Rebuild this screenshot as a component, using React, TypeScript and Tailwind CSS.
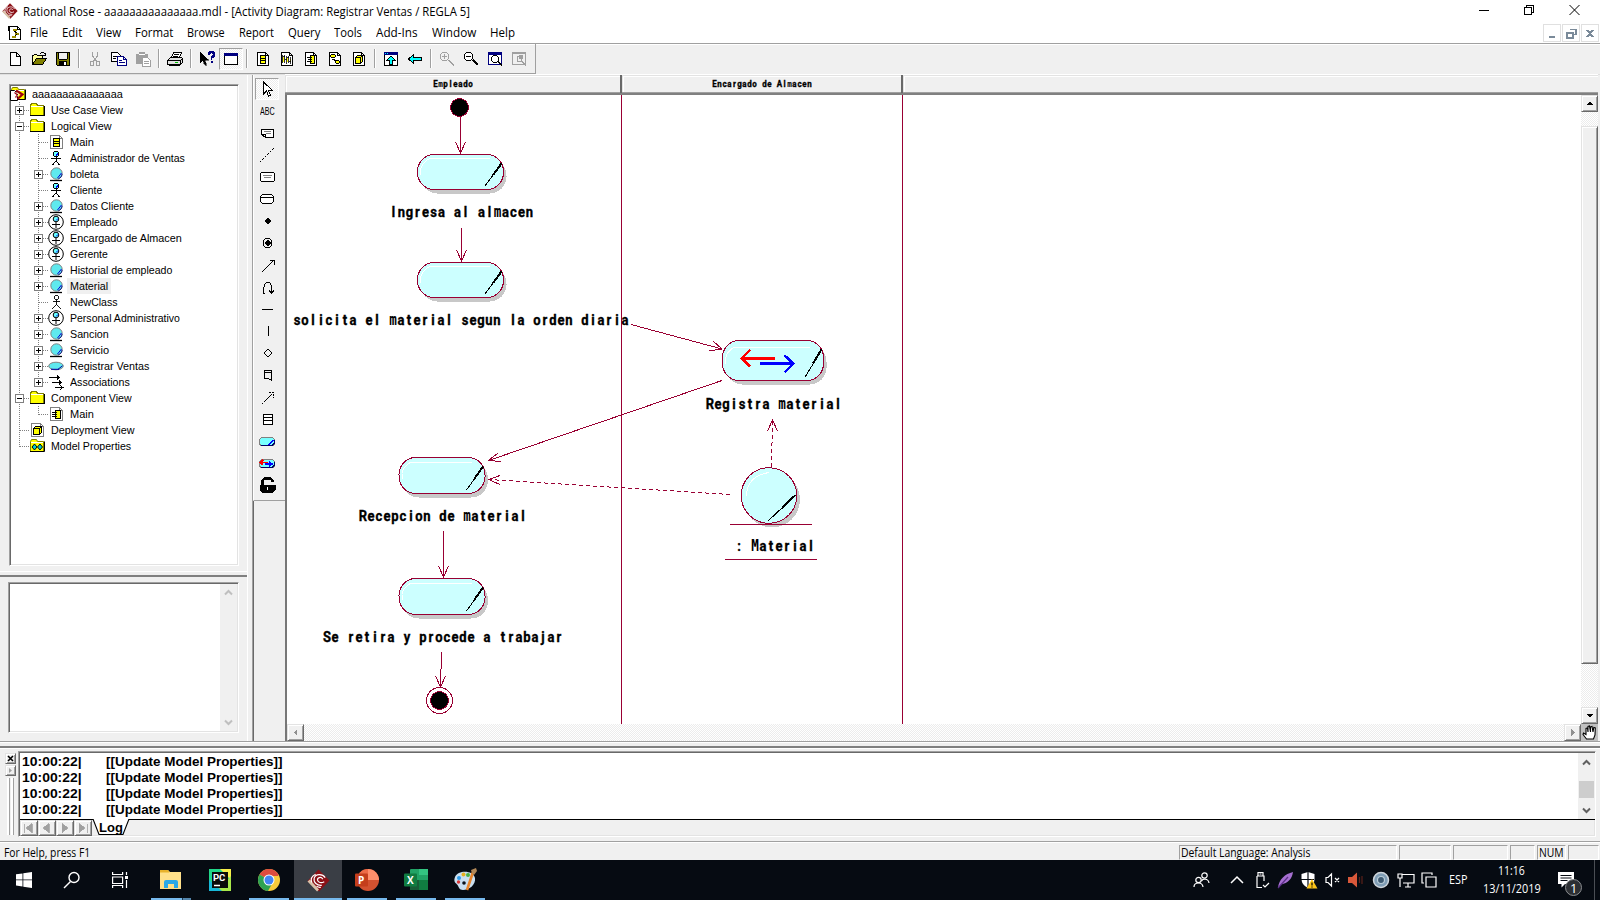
import React, { useLayoutEffect, useRef } from 'react';

const UI = "font-['Open_Sans','Noto_Sans',sans-serif]";
const SANS = "font-['Liberation_Sans',Arial,sans-serif]";
const DITHER = 'bg-[repeating-conic-gradient(#ececec_0_25%,#ffffff_0_50%)] bg-[length:2px_2px]';
const RAISED =
  'bg-[#f0f0f0] border border-t-[#e3e3e3] border-l-[#e3e3e3] border-b-[#696969] border-r-[#696969] shadow-[inset_1px_1px_0_#fff,inset_-1px_-1px_0_#a0a0a0]';
const SUNKEN =
  'border border-t-[#a0a0a0] border-l-[#a0a0a0] border-b-white border-r-white shadow-[inset_1px_1px_0_#696969,inset_-1px_-1px_0_#e3e3e3]';
const ROSE = '#990033';

/* A line of text that is stretched horizontally to a given width. */
function Fit({ w, children, className = '' }: { w: number; children: string; className?: string }) {
  const ref = useRef<HTMLSpanElement>(null);
  useLayoutEffect(() => {
    const el = ref.current;
    if (el && el.offsetWidth) el.style.transform = `scaleX(${w / el.offsetWidth})`;
  }, [w]);
  return (
    <span className={`inline-block shrink-0 whitespace-pre ${className}`} style={{ width: w }}>
      <span ref={ref} className="inline-block origin-left">{children}</span>
    </span>
  );
}

function Ico({ w = 16, h = 16, children, smooth = false }: { w?: number; h?: number; children: React.ReactNode; smooth?: boolean }) {
  return (
    <svg width={w} height={h} viewBox={`0 0 ${w} ${h}`} className="block shrink-0" fill="none" stroke="#000" shapeRendering={smooth ? 'auto' : 'crispEdges'}>
      {children}
    </svg>
  );
}

function RoseLogo({ s = 16 }: { s?: number }) {
  return (
    <svg width={s} height={s} viewBox="0 0 24 24" className="block shrink-0">
      <path d="M12 .5 23.500 12 12.500 23.500 .5 12.500z" fill="#8b1016" />
      <path d="M.5 13 10.500 23.500 12.500 21.500 3 11z" fill="#d8c0a8" />
      <path d="M19 9C16 4.500 9 5 7.500 9.500c-1 4.500 3 8 8 7.500M16.500 10.500c-2-3-6-1.500-5.500 1.200 .5 2.500 4 3.500 7 1.500M9 5.500c-4 2-5.500 5-4 8.500M10 18c1.500 1 3 1.300 4.500 1" stroke="#fff" strokeWidth="1.200" fill="none" />
    </svg>
  );
}

/* ---------- toolbar ---------- */
const page = <path d="M2.500 1.500h8l3 3v10h-11z M10.500 1.500v3h3" fill="#fff" />;
const toolIcons: Record<string, React.ReactNode> = {
  new: <path d="M3.500 1.500h6l4 4v9h-10z M9.500 1.500v4h4" fill="#fff" />,
  open: (
    <>
      <path d="M1.500 13.500v-9h1l1-1h2l1 1h5v3" fill="#ffff9c" />
      <path d="M1.500 13.500l4-6h10l-4 6z" fill="#808000" />
      <path d="M9 2.500h1M10 1.500h3M13 2.500h1M14.500 2v3M12 4.500h3" />
    </>
  ),
  save: (
    <>
      <path d="M1.500 1.500h13v13h-12l-1-1z" fill="#808000" />
      <path d="M4 2h8v6h-8z" fill="#f0f0f0" stroke="none" />
      <path d="M4 10h8v4h-8z" fill="#000" stroke="none" />
      <path d="M9 11h2v3h-2z" fill="#fff" stroke="none" />
      <path d="M3.500 2v6M12.500 2v6M4 8.500h8" />
    </>
  ),
  cut: <path d="M5.500 1v4l4 5M10.500 1v4l-4 5M3.500 10.500h3v4h-3zM9.500 10.500h3v4h-3z" stroke="#a0a0a0" />,
  copy: (
    <>
      <path d="M.5 1.500h6l3 3v6h-9z" fill="#fff" />
      <path d="M2 5.500h4M2 7.500h3" />
      <path d="M6.500 5.500h6l3 3v6h-9z M12.500 5.500v3h3" fill="#fff" stroke="#000080" />
      <path d="M8 9.500h3M8 11.500h6" stroke="#000080" />
    </>
  ),
  paste: (
    <>
      <path d="M1 3h12v10h-12z M4 1h6v3h-6z" fill="#a0a0a0" stroke="none" />
      <path d="M4 3.500h6" stroke="#fff" />
      <path d="M7.500 6.500h5l3 3v6h-8z M9 10.500h5M9 12.500h5" fill="#fff" stroke="#a0a0a0" />
    </>
  ),
  print: (
    <>
      <path d="M4.500 6.500l2-5h8l-2 5" fill="#fff" />
      <path d="M7 3.500h5M6 5.500h5" />
      <path d="M.5 9.500l3-3h11l1 1v4l-2 2h-13z" fill="#e0e0e0" />
      <path d="M.5 9.500h13v4M13.500 9.500l2-2M2.500 13.500v1h10l2-2" />
      <path d="M8 11.500h3" stroke="#00c000" />
    </>
  ),
  help: (
    <>
      <path d="M1 1v11l3-2.500 2 4.500h1.500l-1.500-5h3.500z" fill="#000" strokeWidth=".5" />
      <path d="M10 4v-2h1v-1h3v1h1v3h-1v1h-1.500v3M12 11h1.500" stroke="#000080" strokeWidth="1.600" />
    </>
  ),
  win: (
    <>
      <path d="M1.500 2.500h13v11h-13z" fill="#fff" stroke="#000" />
      <path d="M1 2h14v3h-14z" fill="#000080" stroke="none" />
    </>
  ),
  cls: <>{page}<path d="M5.500 4.500h5v8h-5z M6 7.500h4M6 9.500h4" fill="#ff0" /></>,
  seq: <>{page}<path d="M4 6h1v5h-1zM8 7h1v4h-1zM11 8h1v3h-1z" fill="#ff0" stroke="none" /><path d="M3.500 4v8M5.500 4v8M7.500 5v8M9.500 5v7M11.500 6v7M4 5.500h2M6 8.500h2M8 6.500h2M10 10.500h2" strokeWidth=".8" /></>,
  cmp: <>{page}<path d="M7.500 4.500h4v8h-4z" fill="#ff0" /><path d="M4 6.500h5M5 8.500h4M4 10.500h5" /></>,
  sta: <>{page}<path d="M4.500 3.500h3l1 1v1l-1 1h-3l-1-1v-1z M9.500 9.500h2l1 1v1l-1 1h-2l-1-1v-1z" fill="#ff0" /><path d="M5 8.500h2l2 2" /></>,
  dep: <>{page}<path d="M4.500 6.500l2-2h5v6l-2 2h-5z" fill="#ff0" /><path d="M4.500 6.500h5v6M9.500 6.500l2-2" /></>,
  up: (
    <>
      <path d="M1.500 1.500h13v13h-13z" fill="#fff" />
      <path d="M1 1h14v2.500h-14z" fill="#000080" stroke="none" />
      <path d="M2 2h1M4 2h1" stroke="#0ff" />
      <path d="M8 5l4.500 4.500h-3v4h-3v-4h-3z" fill="#0ff" />
    </>
  ),
  back: <path d="M1.500 8l5-4.500v3h8v3h-8v3z" fill="#0ff" />,
  zin: <path d="M3.500 1.500h4l2 2v4l-2 2h-4l-2-2v-4zM3 5.500h5M5.500 3v5M9 9l6 6M10 9l5 5" stroke="#a0a0a0" />,
  zout: <><path d="M3.500 1.500h4l2 2v4l-2 2h-4l-2-2v-4z" fill="#fff" /><path d="M3 5.500h5M9 9l5 5M10 9l5 5M10 8l5 5" /></>,
  zwin: (
    <>
      <path d="M1.500 1.500h13v12h-13z" fill="#fff" stroke="#000080" />
      <path d="M1 1h14v3h-14z" fill="#000080" stroke="none" />
      <path d="M6.500 4.500h3l2 2v3l-2 2h-3l-2-2v-3z" fill="#fff" />
      <path d="M10 10l5 5M11 10l4 4" />
    </>
  ),
  zund: <><path d="M1.500 1.500h13v12h-13zM1 2.500h13M6.500 5.500h4v5h-4zM10 10l5 5M11 10l4 4" stroke="#a0a0a0" /><path d="M8 4h4v4h-4z" fill="#a0a0a0" stroke="none" /></>,
};
const toolbar = ['new', 'open', 'save', '|', 'cut', 'copy', 'paste', '|', 'print', '|', 'help', 'win', '|', 'cls', 'seq', 'cmp', 'sta', 'dep', '|', 'up', 'back', '|', 'zin', 'zout', 'zwin', 'zund'];

const menus: [string, number, number][] = [
  ['File', 18, 32], ['Edit', 20, 34], ['View', 25, 39], ['Format', 38, 52], ['Browse', 38, 52], ['Report', 35, 49],
  ['Query', 32, 46], ['Tools', 28, 42], ['Add-Ins', 42, 56], ['Window', 44, 58], ['Help', 25, 40],
];

/* ---------- tree ---------- */
const folder = (
  <>
    <path d="M1.500 13.500v-10l1-2h5l1 2h6v10z" fill="#ff0" stroke="#808000" />
    <path d="M2 4.500h12" stroke="#fff" />
    <path d="M1 13.500h14.500v-10" />
  </>
);
const head = (
  <>
    <circle cx="8" cy="4" r="2.700" fill="#6ff" stroke="#000" />
    <path d="M8 5.500l2-2" stroke="#00f" />
  </>
);
const ball = (
  <>
    <circle cx="8.500" cy="7.500" r="5.700" fill="#5fe9ee" stroke="#808080" />
    <path d="M9.500 12l4-5" stroke="#0000e0" />
    <path d="M14.200 8a6 6 0 0 1-4 5" stroke="#000080" strokeWidth=".8" />
    <path d="M2 14.500h12" strokeWidth="1.300" />
  </>
);
const sheet = <><path d="M2.500 1.500h9l3 3v10h-12z" fill="#fff" stroke="#808080" /><path d="M11.500 1.500v3h3" stroke="#808080" /></>;
const treeIcons: Record<string, React.ReactNode> = {
  root: <>{folder}<path d="M.5 4.500h4l3 3v7h-7z" fill="#fff" /><path d="M6 4.500l6.500 4-5 4.500" stroke="#a00010" strokeWidth="2.200" /><path d="M4.500 6.500l3 2.500-2 2.500" stroke="#a00010" strokeWidth="1.300" /><path d="M6.500 6.500l2.500 2-2 2" stroke="#fff" /></>,
  folder,
  main: <>{sheet}<path d="M5.500 4.500h6v8h-6z M6 7.500h5M6 9.500h5" fill="#ff0" /></>,
  cmain: <>{sheet}<path d="M7.500 4.500h5v8h-5z" fill="#ff0" strokeWidth="1.300" /><path d="M4 6.500h5M4 8.500h5M4 10.500h5" /></>,
  deploy: <>{sheet}<path d="M4.500 6.500l2-2h6v6l-2 2h-6z M4.500 6.500h6v6M10.500 6.500l2-2" fill="#ff0" strokeWidth="1.300" /></>,
  props: <>{folder}<path d="M3 9l2.500-3 2.500 3-2.500 3zM8.500 9l2.500-3 2.500 3-2.500 3z" fill="#0cc" /></>,
  actor: <>{head}<path d="M8 7v4M3 8.500h10M8 11l-3.500 4M8 11l3.500 4" /></>,
  plain: <><circle cx="8.500" cy="3.500" r="2.200" strokeWidth=".9" /><path d="M8.500 6v4M5 7.500h7M8.500 10l-4 5M8.500 10l4 5" strokeWidth=".9" /></>,
  ball,
  worker: <><circle cx="8" cy="8" r="7.300" fill="#fff" /><circle cx="8" cy="5" r="2.800" fill="#6ff" /><path d="M8 6.500l2-2" stroke="#00f" /><path d="M8 8v6M4 10.500h8" /></>,
  usecase: <><ellipse cx="8" cy="8" rx="7.300" ry="3.800" fill="#5fe9ee" stroke="#808080" /><path d="M10 11.300l4.500-3.500M3 11.300h8" stroke="#0000a0" /></>,
  assoc: <path d="M1 3.500h10M9 1.500l2 2-2 2M4 8.500h9M11 6.500l2 2-2 2M7 13.500h8M12 11.500l3 2-3 2" />,
};
type Row = { d: 0 | 1 | 2; i: string; t: string; w: number; x?: '+' | '-'; sel?: boolean; last?: boolean };
const rows: Row[] = [
  { d: 0, i: 'root', t: 'aaaaaaaaaaaaaaa', w: 91 },
  { d: 1, i: 'folder', t: 'Use Case View', w: 72, x: '+' },
  { d: 1, i: 'folder', t: 'Logical View', w: 61, x: '-' },
  { d: 2, i: 'main', t: 'Main', w: 24 },
  { d: 2, i: 'actor', t: 'Administrador de Ventas', w: 115 },
  { d: 2, i: 'ball', t: 'boleta', w: 29, x: '+' },
  { d: 2, i: 'actor', t: 'Cliente', w: 32 },
  { d: 2, i: 'ball', t: 'Datos Cliente', w: 64, x: '+' },
  { d: 2, i: 'worker', t: 'Empleado', w: 48, x: '+' },
  { d: 2, i: 'worker', t: 'Encargado de Almacen', w: 112, x: '+' },
  { d: 2, i: 'worker', t: 'Gerente', w: 38, x: '+' },
  { d: 2, i: 'ball', t: 'Historial de empleado', w: 102, x: '+' },
  { d: 2, i: 'ball', t: 'Material', w: 38, x: '+', sel: true },
  { d: 2, i: 'plain', t: 'NewClass', w: 48 },
  { d: 2, i: 'worker', t: 'Personal Administrativo', w: 110, x: '+' },
  { d: 2, i: 'ball', t: 'Sancion', w: 39, x: '+' },
  { d: 2, i: 'ball', t: 'Servicio', w: 39, x: '+' },
  { d: 2, i: 'usecase', t: 'Registrar Ventas', w: 79, x: '+' },
  { d: 2, i: 'assoc', t: 'Associations', w: 60, x: '+', last: true },
  { d: 1, i: 'folder', t: 'Component View', w: 81, x: '-' },
  { d: 2, i: 'cmain', t: 'Main', w: 24, last: true },
  { d: 1, i: 'deploy', t: 'Deployment View', w: 83 },
  { d: 1, i: 'props', t: 'Model Properties', w: 80, last: true },
];

/* One 19px wide guide cell of a tree row. */
function Guide({ row, level }: { row: Row; level: 1 | 2 }) {
  const own = row.d === level;
  const dots = { stroke: '#808080', strokeDasharray: '1 1' };
  return (
    <svg width="19" height="16" className="block shrink-0" fill="none" shapeRendering="crispEdges">
      <path d={own && row.last ? 'M9.500 0V9' : 'M9.500 0V16'} {...dots} />
      {own && <path d="M10 8.500H19" {...dots} />}
      {own && row.x && (
        <>
          <path d="M5.500 4.500h8v8h-8z" fill="#fff" stroke="#808080" />
          <path d={row.x === '+' ? 'M7 8.500h5M9.500 6v5' : 'M7 8.500h5'} stroke="#000" />
        </>
      )}
    </svg>
  );
}

function Tree() {
  return (
    <div className={`ml-[9px] mt-[9px] h-[482px] w-[230px] bg-white ${SUNKEN} pt-px ${SANS} text-[11px] leading-4`}>
      {rows.map((r, n) => (
        <div key={n} className="flex h-4 items-center">
          {r.d > 0 && <Guide row={r} level={1} />}
          {r.d > 1 && <Guide row={r} level={2} />}
          <Ico smooth={['ball', 'worker', 'usecase', 'root', 'props'].includes(r.i)}>{treeIcons[r.i]}</Ico>
          <span className={`ml-[3px] flex h-4 items-center px-[3px] ${r.sel ? 'bg-[#f0f0f0]' : ''}`}>
            <Fit w={r.w}>{r.t}</Fit>
          </span>
        </div>
      ))}
    </div>
  );
}

/* ---------- toolbox ---------- */
const pill = (
  <>
    <rect x="4.500" y="7.500" width="15" height="8" rx="3" fill="#7ff" stroke="#808080" />
    <path d="M6 15.500h11l2-2v-4" stroke="#000060" />
  </>
);
const box: React.ReactNode[] = [
  <path d="M8.500 4v12l3-3 2 5 2-1-2-4.500h4z" fill="#fff" />,
  null,
  <><path d="M6.500 7.500h12v8h-8l-4-3z" fill="#fff" /><path d="M6.500 12.500h4v3" /><path d="M9 9.500h7M11 11.500h5" stroke="#808080" /></>,
  <path d="M5 18L19 4" strokeDasharray="2 1.500" />,
  <><rect x="5.500" y="6.500" width="14" height="9" rx="2" fill="#fff" /><path d="M8 9.500h9M9 11.500h7" stroke="#808080" /></>,
  <path d="M7.500 6.500h9l2 2v5l-2 2h-9l-2-2v-5zM5 9.500h14" fill="#fff" />,
  <path d="M12 8.500h1v1h1v1h1v1h-1v1h-1v1h-1v-1h-1v-1h-1v-1h1v-1h1z" fill="#000" />,
  <><circle cx="12.500" cy="11" r="4.500" /><path d="M12 8.500h1v1h1v1h1v1h-1v1h-1v1h-1v-1h-1v-1h-1v-1h1v-1h1z" fill="#000" /></>,
  <path d="M7 18L19 6M15 6.500h4.500v4" />,
  <path d="M9.500 17h-1v-3l1-5 2-3h3l2 4v7M14 14l2.500 3.500 2.500-3" />,
  <path d="M7 11.500h11" />,
  <path d="M13.500 6v10" />,
  <path d="M13 7l4 4-4 4-4-4z" />,
  <path d="M9.500 6.500h7v10l-3-2h-4zM9 8.500h8" />,
  <path d="M7 18L19 6M14 6.500h4.500v5" strokeDasharray="2 1" />,
  <path d="M8.500 6.500h9v10h-9zM8 9.500h9M8 12.500h9" fill="#fff" />,
  <>{pill}<path d="M14 15l4-5" stroke="#00f" strokeWidth="1.500" /></>,
  <>{pill}<path d="M5 10.500h8M8 8l-2.500 2.500L8 13" stroke="#f00" strokeWidth="1.500" /><path d="M10 12h7M14 9.500l3 2.500-3 2.500" stroke="#00f" strokeWidth="1.500" /></>,
  <><path d="M7.500 11V6.500l2-2h6l2 2v1.500" strokeWidth="2.600" /><path d="M5 11h15v5l-2 2h-11l-2-2z" fill="#000" /><path d="M12.500 13v3" stroke="#fff" strokeWidth="1.300" /></>,
];

function Toolbox() {
  return (
    <div className="flex w-[34px] shrink-0 flex-col border-l border-[#a0a0a0]">
      <div className="flex h-[426px] flex-col items-center border-b border-l border-b-[#a0a0a0] border-l-white pl-[2px] pr-[8px] pt-[3px]">
        {box.map((g, n) => (
          <div key={n} className={`flex h-[22px] w-6 shrink-0 items-center justify-center ${n === 0 ? `border border-b-white border-l-[#a0a0a0] border-r-white border-t-[#a0a0a0] ${DITHER}` : ''}`}>
            {n === 1 ? <Fit w={15} className="font-['Liberation_Sans',sans-serif] text-[11px] leading-4">ABC</Fit> : <Ico w={24} h={22}>{g}</Ico>}
          </div>
        ))}
      </div>
      <div className="flex-1 border-l border-[#696969]" />
    </div>
  );
}

/* ---------- diagram ---------- */
/* Text on a fixed pitch: every glyph is centred in its own cell. */
function Cells({ x, y, t, p = 8, s = 15.5 }: { x: number; y: number; t: string; p?: number; s?: number }) {
  const k = 0.84;
  const xs = t.split('').map((_, i) => ((i + 0.5) * p) / k).join(' ');
  return (
    <text
      transform={`translate(${x} ${y}) scale(${k} 1)`}
      x={xs}
      textAnchor="middle"
      fontFamily="Roboto, 'Liberation Sans', sans-serif"
      fontWeight="700"
      fontSize={s}
      fill="#000"
      stroke="#000"
      strokeWidth=".35"
      xmlSpace="preserve"
    >
      {t.split(/([mM])/).map((part, i) =>
        /^[mM]$/.test(part) ? <tspan key={i} fontFamily="'DejaVu Sans Mono', monospace" fontSize={s * 0.97} strokeWidth="0">{part}</tspan> : part,
      )}
    </text>
  );
}

function Activity({ x, y, w, h }: { x: number; y: number; w: number; h: number }) {
  return (
    <g shapeRendering="crispEdges">
      <rect x={x + 3.500} y={y + 4.500} width={w - 1} height={h - 1} rx={17} ry={17} fill="#c8c8c8" />
      <rect x={x + 0.5} y={y + 0.5} width={w - 1} height={h - 1} rx={16.500} ry={17} fill="#ccffff" stroke={ROSE} />
      <path d={`M${x + 3.500} ${y + h / 2 + 3}v-5q1-7 9-11.500H${x + w - 14}`} stroke="#fff" fill="none" />
      <path d={`M${x + w - 2.500} ${y + 9.500}L${x + w - 11} ${y + h / 2 + 3}`} stroke="#000" strokeWidth="2" />
      <path d={`M${x + w - 10} ${y + h / 2 + 2}L${x + w - 19} ${y + h - 4}`} stroke="#000" />
    </g>
  );
}

function Diagram() {
  return (
    <svg width="1294" height="629" viewBox="287 95 1294 629" className="block shrink-0 bg-white" fill="none">
      <g stroke={ROSE} shapeRendering="crispEdges">
        <path d="M621.500 95V724M902.500 95V724" />
        <path d="M460.500 117V153M455.500 142L460.500 153L465.500 142" />
        <path d="M461.500 228V261M456.500 250L461.500 261L466.500 250" />
        <path d="M631 324.500L722 349M713 341L722 349L709 351" />
        <path d="M722 380.500L488.500 460.500M498 453L488.500 460.500L501 461.500" />
        <path d="M730 494.500L488.500 479.500" strokeDasharray="4 3" />
        <path d="M500 475.500L488.500 479.500L500 484.500" />
        <path d="M771.500 467L772.500 420" strokeDasharray="4 3" />
        <path d="M767.500 431L772.500 420L777.500 431" />
        <path d="M443.500 531V578M438.500 566L443.500 577L448.500 566" />
        <path d="M441.500 652L440.500 687M435.500 676L440.500 687L445.500 676" />
        <circle cx="459.500" cy="107.500" r="9" fill="#000" />
        <circle cx="439.500" cy="700.500" r="13" />
        <circle cx="439.500" cy="700.500" r="9" fill="#000" />
      </g>
      <Activity x={417} y={154} w={87} h={36} />
      <Activity x={417} y={262} w={87} h={36} />
      <Activity x={722} y={340} w={102} h={41} />
      <Activity x={398.5} y={457} w={87} h={37} />
      <Activity x={398.5} y={578} w={87} h={37} />
      <g shapeRendering="crispEdges">
        <path d="M741 358.500H775M750 350L741.500 358.500L750 366.500" stroke="#f00" strokeWidth="2.600" />
        <path d="M760 363.500H794M784.500 355.500L793.500 363.500L784.500 372.500" stroke="#00f" strokeWidth="2.600" />
        <circle cx="772" cy="499.500" r="28" fill="#c8c8c8" />
        <circle cx="769" cy="495.500" r="27.800" fill="#ccffff" stroke={ROSE} />
        <path d="M746.500 496Q747 476 769 472.500" stroke="#fff" />
        <path d="M795.500 495L782 508" stroke="#000" strokeWidth="2" />
        <path d="M783 507L768 521" stroke="#000" />
        <path d="M730 524.500H812M725 559.500H817" stroke={ROSE} />
      </g>
      <Cells x={389.5} y={217} t="Ingresa al almacen" />
      <Cells x={293} y={325} t="solicita el material segun la orden diaria" />
      <Cells x={706} y={409} t="Registra material" />
      <Cells x={359} y={521} t="Recepcion de material" />
      <Cells x={735} y={551} t=": Material" />
      <Cells x={323} y={642} t="Se retira y procede a trabajar" />
    </svg>
  );
}

function Lane({ t, className }: { t?: string; className: string }) {
  return (
    <div className={`flex h-[17px] items-center justify-center border-l border-t border-[#e3e3e3] bg-[#f0f0f0] shadow-[inset_1px_1px_0_#fff] ${className}`}>
      {t && (
        <svg width={t.length * 5} height="12" className="-mt-[3px] block">
          <Cells x={0} y={9.500} t={t} p={5} s={9.5} />
        </svg>
      )}
    </div>
  );
}

function Tri({ d, c = '#000' }: { d: 'u' | 'd' | 'l' | 'r'; c?: string }) {
  const p = { u: 'M1 6h7L4.500 2.500z', d: 'M1 3h7L4.500 6.500z', l: 'M6 1v7L2.500 4.500z', r: 'M3 1v7L6.500 4.500z' }[d];
  return <svg width="9" height="9" className="block" shapeRendering="crispEdges"><path d={p} fill={c} /></svg>;
}
function Chev({ up, c }: { up?: boolean; c: string }) {
  return <svg width="9" height="7" className="block" fill="none"><path d={up ? 'M1 5.500L4.500 2L8 5.500' : 'M1 1.500L4.500 5L8 1.500'} stroke={c} strokeWidth="2" /></svg>;
}

function Canvas() {
  return (
    <div className="flex w-[1313px] shrink-0 flex-col">
      <div className="flex h-[22px] border-b-2 border-b-[#808080] border-t border-t-white bg-[#a0a0a0]">
        <Lane t="Empleado" className="w-[335px] pr-px" />
        <div className="w-[2px] bg-[#696969]" />
        <Lane t="Encargado de Almacen" className="w-[279px]" />
        <div className="w-[2px] bg-[#696969]" />
        <Lane className="flex-1" />
      </div>
      <div className="flex border-l-2 border-l-[#777]">
        <Diagram />
        <div className="flex h-[629px] w-[17px] flex-col">
          <div className={`flex h-[17px] items-center justify-center ${RAISED}`}><Tri d="u" /></div>
          <div className={`h-[14px] ${DITHER}`} />
          <div className={`h-[538px] ${RAISED}`} />
          <div className={`flex-1 ${DITHER}`} />
          <div className={`flex h-[17px] items-center justify-center ${RAISED}`}><Tri d="d" /></div>
        </div>
      </div>
      <div className="flex h-[17px] border-l-2 border-l-[#777]">
        <div className={`flex w-[17px] items-center justify-center ${RAISED}`}><Tri d="l" c="#909090" /></div>
        <div className={`w-[1260px] ${DITHER}`} />
        <div className={`flex w-[17px] items-center justify-center ${RAISED}`}><Tri d="r" c="#909090" /></div>
        <div className="flex w-[17px] items-center justify-center bg-[#c0c0c0]">
          <Ico w={15} h={15} smooth>
            <path d="M4.500 14L1 9.500 1.500 8 4 9.500V3.500L5.500 3l.5 4V1.500L7.500 1 8.500 7V2l1.500-.5L11 7l.8-4.500 1.500.5-.3 7-1.500 4z" fill="#fff" strokeWidth="1.100" />
          </Ico>
        </div>
      </div>
    </div>
  );
}

/* ---------- log ---------- */
function Log() {
  return (
    <div className="flex h-[89px] border-t-2 border-[#808080] pt-[3px] shadow-[inset_0_1px_0_#fff]">
      <div className="flex w-[18px] shrink-0 flex-col items-center pt-[2px]">
        <div className={`mr-[-2px] flex h-[11px] w-[11px] items-center justify-center ${RAISED}`}>
          <svg width="7" height="7"><path d="M1 1l5 5M6 1l-5 5" stroke="#000" strokeWidth="1.600" /></svg>
        </div>
        <div className={`mr-[-2px] mt-px flex h-[11px] w-[11px] items-center justify-center ${RAISED}`}>
          <svg width="5" height="7"><path d="M1 1v5l3-2.500z" fill="#a0a0a0" /></svg>
        </div>
        <div className="mr-[-2px] mt-[2px] flex gap-[1px]">
          <div className="h-[57px] w-[3px] border-r border-[#a0a0a0] bg-white" />
          <div className="h-[57px] w-[3px] border-r border-[#a0a0a0] bg-white" />
        </div>
      </div>
      <div className={`flex h-[86px] w-[1578px] flex-col bg-[#f0f0f0] ${SUNKEN}`}>
        <div className="ml-px mt-px flex h-[67px] border-b border-black bg-white">
          <div className={`flex-1 pl-[2px] pt-px ${SANS} text-[13px] font-bold leading-4`}>
            {[0, 1, 2, 3].map((n) => (
              <div key={n} className="flex h-4">
                <Fit w={60}>10:00:22|</Fit>
                <Fit w={176} className="ml-6">[[Update Model Properties]]</Fit>
              </div>
            ))}
          </div>
          <div className="flex w-[17px] flex-col items-center bg-[#f0f0f0]">
            <div className="mt-[6px]"><Chev up c="#606060" /></div>
            <div className="mt-[15px] h-[17px] w-[15px] bg-[#cdcdcd]" />
            <div className="mt-[9px]"><Chev c="#606060" /></div>
          </div>
        </div>
        <div className="ml-px flex h-4">
          {['M4 3v9M12 3v9L6 7.500z', 'M11 3v9L5 7.500z', 'M6 3v9L12 7.500z', 'M5 3v9L11 7.500zM13 3v9'].map((d, n) => (
            <div key={n} className={`h-4 w-[18px] ${RAISED}`}>
              <svg width="16" height="14" className="block" shapeRendering="crispEdges"><path d={d} transform="translate(-1 -.5)" fill="#a0a0a0" stroke="#a0a0a0" strokeWidth=".8" /></svg>
            </div>
          ))}
          <div className="relative h-4 w-[38px]">
            <svg width="38" height="17" className="absolute -top-px left-0 block"><path d="M1 0L7 15.500H31L37 0" fill="#fff" stroke="#000" strokeWidth="1.100" /></svg>
            <div className={`absolute left-[7px] top-0 ${SANS} text-[13px] font-bold leading-4`}><Fit w={24}>Log</Fit></div>
          </div>
        </div>
      </div>
    </div>
  );
}

function Status() {
  const panes: [number, string, number][] = [[218, 'Default Language: Analysis', 129], [52, '', 0], [55, '', 0], [25, '', 0], [29, 'NUM', 25], [31, '', 0]];
  return (
    <div className={`flex h-[19px] items-end border-t border-[#a0a0a0] bg-[#f0f0f0] shadow-[inset_0_1px_0_#fff] ${UI} text-[12px] leading-[13px]`}>
      <div className="w-[1179px] pb-px pl-1"><Fit w={86}>For Help, press F1</Fit></div>
      <div className="flex gap-[2px]">
        {panes.map(([w, t, tw], n) => (
          <div key={n} className="h-[15px] border border-b-white border-l-[#a0a0a0] border-r-white border-t-[#a0a0a0] pl-px" style={{ width: w }}>
            {t && <Fit w={tw}>{t}</Fit>}
          </div>
        ))}
      </div>
    </div>
  );
}

/* ---------- taskbar ---------- */
const apps: { k: string; g: React.ReactNode; run?: boolean; on?: boolean }[] = [
  { k: 'explorer', run: true, g: <><path d="M1 2h8l2 2h11v17h-21z" fill="#ffe08a" /><path d="M1 2h8l1.500 2.500H1z" fill="#e8b22c" /><path d="M5 20v-6q0-2 2-2h10q2 0 2 2v6h-4v-4h-6v4z" fill="#2aa8e8" /></> },
  { k: 'pycharm', g: <><path d="M1 1h22v22h-22z" fill="#21d789" /><path d="M12 1h11v11z" fill="#f7ee4a" /><path d="M23 8v15H9z" fill="#a8e84a" /><path d="M1 12v11h13z" fill="#18b8d8" /><path d="M4 4h16v16h-16z" fill="#0a0a0a" /><path d="M6 17.500h6" stroke="#fff" strokeWidth="1.500" /><text x="5" y="12.500" fontFamily="Roboto, sans-serif" fontWeight="700" fontSize="9.500" fill="#fff">PC</text></> },
  { k: 'chrome', run: true, g: <><circle cx="12" cy="12" r="11" fill="#f9cb3c" /><path d="M12 12L2.500 6.500A11 11 0 0 1 21.500 6.500L21 8H12z" fill="#dd4b3e" /><path d="M12 12L2.500 6.500A11 11 0 0 0 11 23L16 14z" fill="#2da253" /><circle cx="12" cy="12" r="5.500" fill="#fff" /><circle cx="12" cy="12" r="4.500" fill="#4285f4" /></> },
  { k: 'rose', run: true, on: true, g: null },
  { k: 'powerpoint', run: true, g: <><circle cx="13" cy="12" r="11" fill="#d35230" /><path d="M13 1a11 11 0 0 1 11 11H13z" fill="#ff8f6b" /><path d="M13 1v11h-11a11 11 0 0 1 11-11z" fill="#ed6c47" /><rect x="0" y="5.500" width="13" height="13" rx="1" fill="#c43e1c" /><text x="3" y="15.500" fontFamily="'Open Sans', sans-serif" fontWeight="700" fontSize="10" fill="#fff">P</text></> },
  { k: 'excel', run: true, g: <><rect x="6" y="1" width="18" height="21" rx="1" fill="#21a366" /><path d="M15 1h9v6h-9z" fill="#33c481" /><path d="M6 12h18v10h-18z" fill="#107c41" /><path d="M6 12h9v10h-9z" fill="#185c37" /><rect x="0" y="5.500" width="13" height="13" rx="1" fill="#107c41" /><text x="3" y="15.500" fontFamily="'Open Sans', sans-serif" fontWeight="700" fontSize="10" fill="#fff">X</text></> },
  { k: 'paint', run: true, g: <><path d="M2 9C5 2 20 2 22 10c1 7-6 12-12 12-4 0-4-3-5.500-5S0 14 2 9z" fill="#c9dff0" /><circle cx="6" cy="10" r="2" fill="#2d9be8" /><circle cx="10.500" cy="6.500" r="2" fill="#e8b020" /><circle cx="5.500" cy="14" r="1.700" fill="#d83838" /><circle cx="15" cy="7" r="2" fill="#48b048" /><circle cx="11" cy="15" r="1.800" fill="#0b1018" /><path d="M20 4L14 22" stroke="#e8862c" strokeWidth="2.600" /><path d="M19 5l-1-3 5-2 1 3-3 4z" fill="#b08858" /></> },
];

function TrayIcon({ w, children }: { w: number; children: React.ReactNode }) {
  return (
    <div className="flex h-full items-center justify-center" style={{ width: w }}>
      <svg width="18" height="18" viewBox="0 0 18 18" fill="none" stroke="#fff" strokeWidth="1.200" className="block">{children}</svg>
    </div>
  );
}

function Taskbar() {
  return (
    <div className={`flex h-10 bg-[#060b12] text-white ${UI}`}>
      <div className="flex w-12 items-center justify-center">
        <svg width="16" height="16"><path d="M0 2.300l6.500-.9v6.100H0zM7.300 1.300L16 0v7.500H7.300zM0 8.300h6.500v6.200L0 13.600zM7.300 8.300H16V16l-8.700-1.300z" fill="#fff" /></svg>
      </div>
      <div className="flex w-12 items-center justify-center">
        <svg width="18" height="18" fill="none" stroke="#fff" strokeWidth="1.400"><circle cx="11" cy="6.500" r="5" /><path d="M7.500 10.500L1 17" /></svg>
      </div>
      <div className="flex w-12 items-center justify-center">
        <svg width="16" height="16" fill="none" stroke="#fff" strokeWidth="1.200"><path d="M.6 0v2.500h10V0M.6 5h10v6.500H.6zM.6 16v-2.500h10V16M14.500 0v3M14.500 8v8" /><path d="M13 4h3v3h-3z" fill="#fff" stroke="none" /></svg>
      </div>
      <div className="ml-[3px] flex gap-px">
        {apps.map((a) => (
          <div key={a.k} className={`flex h-10 w-12 flex-col items-center ${a.on ? 'bg-[#3a3e45]' : ''}`}>
            <div className="flex h-[38px] items-center pt-[2px]">
              {a.g ? <svg width="24" height="24" viewBox="0 0 24 24" className="block">{a.g}</svg> : <RoseLogo s={23} />}
            </div>
            {a.run && (
              <div className={`flex h-[2px] justify-end bg-[#76b9ed] ${a.on ? 'w-12' : 'w-10'}`}>
                {a.k === 'explorer' && <div className="w-[9px] border-l border-[#1d3a52] bg-[#5486ad]" />}
              </div>
            )}
          </div>
        ))}
      </div>
      <div className="ml-[697px] flex">
        <TrayIcon w={30}><circle cx="12.500" cy="4.500" r="2.700" /><circle cx="6.500" cy="9" r="2.700" /><path d="M2 16q0-4 4.500-4 4 0 4.500 4M9.500 10q1-2 3.500-2 3.500.5 4 4" /></TrayIcon>
      </div>
      <div className="ml-[9px] flex">
        <TrayIcon w={24}><path d="M3 12l6-6 6 6" strokeWidth="1.500" /></TrayIcon>
        <TrayIcon w={24}><path d="M6 5V1.500h5V5M5 5h7v5M5 5v11.500h5M7.500 3h2M11 14l2 2 4-4" /></TrayIcon>
        <TrayIcon w={24}><path d="M2 17C3 8 9 3 17 1c-1 7-5 11-12 12.500z" fill="#a56fd0" stroke="none" /><path d="M2 17L12 6" stroke="#5a2d86" /></TrayIcon>
        <TrayIcon w={24}><path d="M8 1l6.500 2v5q0 6-6.500 9-6.500-3-6.500-9V3z" fill="#fff" stroke="none" /><path d="M8 1v15M1 8.500h13" stroke="#060b12" /><path d="M12 8l5.500 9.500h-11z" fill="#fcc419" stroke="none" /><path d="M12 11.500v3M12 15.500v1" stroke="#000" /></TrayIcon>
        <TrayIcon w={24}><path d="M2 6.500h2l3.500-3.500v12l-3.500-3.500H2zM11 7l4 4M15 7l-4 4" /></TrayIcon>
        <TrayIcon w={22}><path d="M1 6h4l5-4.500v15l-5-4.500H1z" fill="#d8583a" stroke="none" /><path d="M12.500 6v6M15 5v8" stroke="#5a2018" /></TrayIcon>
        <TrayIcon w={28}><circle cx="9" cy="9" r="7.500" fill="#7f9db5" stroke="#cfd6dc" strokeWidth="1.500" /><circle cx="9" cy="9" r="3.500" fill="#3d5a72" stroke="#b8ccd8" /></TrayIcon>
        <TrayIcon w={22}><path d="M5 3.500h12v8.500H6M11 12v4M8 16h6M1 3h4v4H1zM3 7v9" /></TrayIcon>
        <TrayIcon w={24}><path d="M6 6h10v10H6zM4 12H2V2h10v2" /></TrayIcon>
      </div>
      <div className="ml-[8px] flex h-full items-center text-[12px] leading-none"><Fit w={18}>ESP</Fit></div>
      <div className="ml-[15px] flex w-[59px] flex-col items-center pt-[2px] text-[12px] leading-[18px]">
        <Fit w={27}>11:16</Fit>
        <Fit w={58}>13/11/2019</Fit>
      </div>
      <div className="relative ml-[17px] h-10 w-[26px]">
        <svg width="26" height="40" className="block"><path d="M0 12h16v12h-9l-3.500 3.500V24H0z" fill="#fff" /><path d="M2.500 15.500h11M2.500 18h11M2.500 20.500h7" stroke="#060b12" /><circle cx="15.500" cy="27.500" r="8" fill="#2c2f33" stroke="#8a8d90" /></svg>
        <span className="absolute left-[12px] top-[20px] text-[13px] leading-4">1</span>
      </div>
      <div className="ml-[10px] w-px bg-[#4a4e54]" />
    </div>
  );
}

export default function App() {
  return (
    <div className="flex h-[900px] w-[1600px] flex-col overflow-hidden bg-[#f0f0f0] text-black">
      <div className={`flex h-[22px] items-center bg-white pl-[2px] ${UI} text-[12px] leading-none`}>
        <RoseLogo />
        <Fit w={447} className="ml-[5px] pt-[2px]">Rational Rose - aaaaaaaaaaaaaaa.mdl - [Activity Diagram: Registrar Ventas / REGLA 5]</Fit>
        <svg width="104" height="20" className="ml-[1009px] block" fill="none" stroke="#000" shapeRendering="crispEdges">
          <path d="M0 9.500h10M45.500 6.500h7v7h-7zM47.500 6.500v-2h7v7h-2" />
          <path d="M90.500 4l10 10M100.500 4l-10 10" shapeRendering="auto" />
        </svg>
      </div>
      <div className={`flex h-[22px] items-center border-b border-[#a0a0a0] bg-white pl-[7px] ${UI} text-[12px] leading-none`}>
        <Ico><path d="M2.500 1.500h8l3 3v10h-11z M10.500 1.500v3h3" fill="#fff" /><path d="M6.500 4.500h3v1h-3zM8.500 8.500h3v1h-3zM5.500 11.500h3v1h-3z" stroke="#a09000" fill="#ff0" /><path d="M1 1.500h5M1.500 1v5M7 6.500l3 1M8 10.500l2-1" /></Ico>
        <div className="ml-[7px] flex">
          {menus.map(([t, w, cell]) => (
            <div key={t} style={{ width: cell }}><Fit w={w}>{t}</Fit></div>
          ))}
        </div>
        <div className="ml-[1013px] flex gap-px">
          {['M5 11h6v2h-6z', 'M4 8h6v5h-6zM7 4.500h6v5h-2', 'M5 5l6 7M11 5l-6 7'].map((d, n) => (
            <div key={n} className="h-[18px] w-[18px] border border-[#e0e0e0]">
              <svg width="16" height="16" fill="none" className="block" shapeRendering="crispEdges"><path d={d} stroke="#7a8a99" strokeWidth={n === 0 ? 0 : n === 1 ? 1.3 : 2.2} fill={n === 0 ? '#7a8a99' : 'none'} /></svg>
            </div>
          ))}
        </div>
      </div>
      <div className="flex h-[31px] items-center border-b border-[#e0e0e0] shadow-[inset_0_1px_0_#fff]">
        <div className="flex h-full w-[536px] items-center border-b border-r border-[#a0a0a0] pl-[3px]">
          {toolbar.map((k, n) =>
            k === '|' ? (
              <div key={n} className="mx-[3px] h-[19px] w-[2px] shrink-0 border-l border-r border-l-[#a0a0a0] border-r-white" />
            ) : (
              <div key={n} className={`flex h-[22px] w-6 shrink-0 items-center justify-center ${k === 'win' ? `border border-b-white border-l-[#a0a0a0] border-r-white border-t-[#a0a0a0] ${DITHER}` : ''}`}>
                <Ico>{toolIcons[k]}</Ico>
              </div>
            ),
          )}
        </div>
      </div>
      <div className="flex h-[667px] border-b border-[#a0a0a0]">
        <div className="flex w-[252px] shrink-0 flex-col">
          <div className="flex h-full w-[248px] flex-col border-r border-white">
            <Tree />
            <div className="mt-[5px] h-[4px] border-t border-white" />
            <div className="h-[2px] bg-[#808080]" />
            <div className={`ml-[8px] mt-[5px] flex h-[151px] w-[231px] justify-end bg-white ${SUNKEN} p-px`}>
              <div className="flex w-[17px] flex-col items-center justify-between bg-[#f0f0f0] py-[5px]">
                <Chev up c="#bfbfbf" />
                <Chev c="#bfbfbf" />
              </div>
            </div>
          </div>
        </div>
        <Toolbox />
        <div className="-ml-px -mt-px flex">
          <Canvas />
        </div>
      </div>
      <div className="h-[4px] shadow-[inset_0_1px_0_#fff]" />
      <Log />
      <div className="flex-1" />
      <Status />
      <Taskbar />
    </div>
  );
}
